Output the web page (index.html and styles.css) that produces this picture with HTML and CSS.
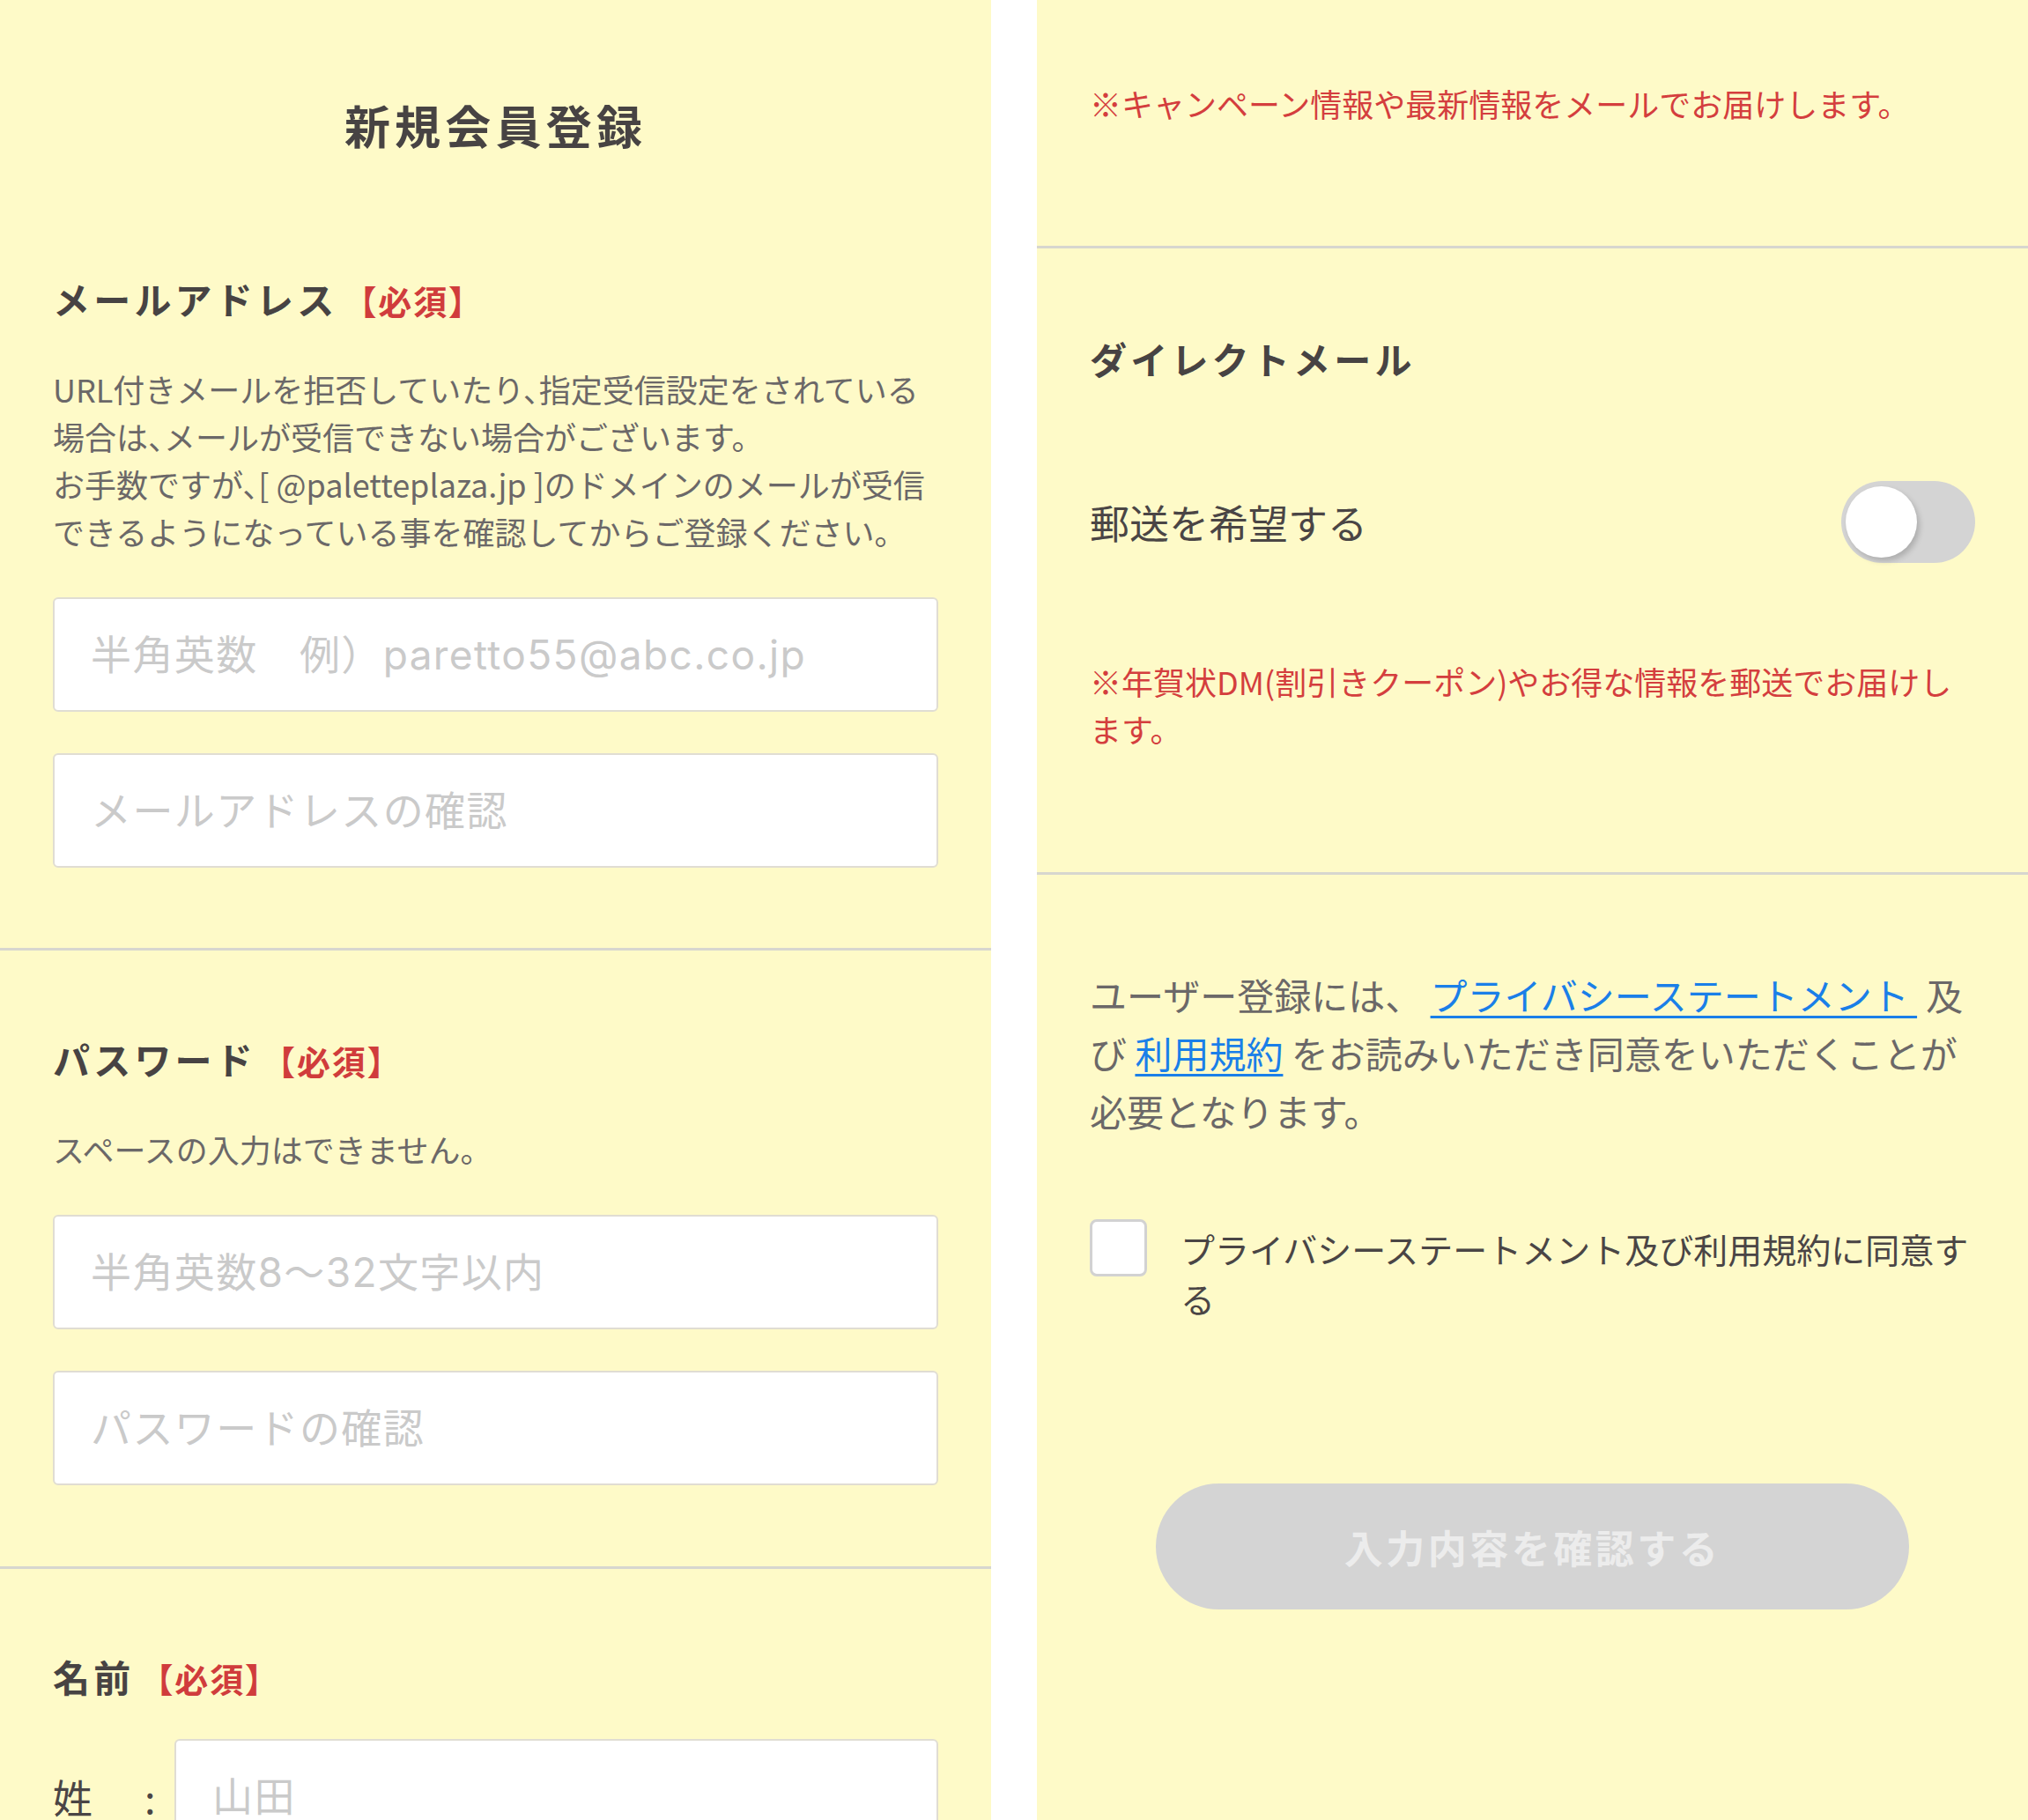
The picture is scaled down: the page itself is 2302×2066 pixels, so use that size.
FILE: index.html
```html
<!DOCTYPE html>
<html lang="ja">
<head>
<meta charset="utf-8">
<title>新規会員登録</title>
<link rel="stylesheet" href="styles.css">
</head>
<body>
<div class="screen">
  <div class="panel">
    <section class="sec sec-first">
      <h1 class="title">新規会員登録</h1>
      <h2 class="label">メールアドレス<span class="req">【必須】</span></h2>
      <p class="note note-compact">URL付きメールを拒否していたり、指定受信設定をされている場合は、メールが受信できない場合がございます。<br>お手数ですが、[ @paletteplaza.jp ]のドメインのメールが受信できるようになっている事を確認してからご登録ください。</p>
      <div class="fields">
        <input class="field" type="email" placeholder="半角英数　例）paretto55@abc.co.jp">
        <input class="field" type="email" placeholder="メールアドレスの確認">
      </div>
    </section>
    <section class="sec sec-pass">
      <h2 class="label">パスワード<span class="req">【必須】</span></h2>
      <p class="note">スペースの入力はできません。</p>
      <div class="fields">
        <input class="field" type="password" placeholder="半角英数8〜32文字以内">
        <input class="field" type="password" placeholder="パスワードの確認">
      </div>
    </section>
    <section class="sec sec-name sec-last">
      <h2 class="label">名前<span class="req">【必須】</span></h2>
      <div class="name-row">
        <span class="name-label">姓</span>
        <span class="name-colon">:</span>
        <input class="field name-field" type="text" placeholder="山田">
      </div>
    </section>
  </div>

  <div class="panel">
    <section class="sec sec-mail">
      <p class="alert">※キャンペーン情報や最新情報をメールでお届けします。</p>
    </section>
    <section class="sec sec-dm">
      <h2 class="label">ダイレクトメール</h2>
      <div class="switch-row">
        <span class="switch-text">郵送を希望する</span>
        <span class="switch"><span class="knob"></span></span>
      </div>
      <p class="alert alert-dm">※年賀状DM(割引きクーポン)やお得な情報を郵送でお届けします。</p>
    </section>
    <section class="sec sec-last sec-agree">
      <p class="agree-text">ユーザー登録には、 <a href="#" class="link link-ps">プライバシーステートメント </a>及び <a href="#" class="link">利用規約</a> をお読みいただき同意をいただくことが必要となります。</p>
      <label class="check-row">
        <span class="checkbox"></span>
        <span class="check-text">プライバシーステートメント及び利用規約に同意する</span>
      </label>
      <div class="btn-wrap">
        <button class="submit" type="button" disabled>入力内容を確認する</button>
      </div>
    </section>
  </div>
</div>
</body>
</html>
```

FILE: styles.css
```css
html, body {
  margin: 0;
  padding: 0;
  background: #ffffff;
}

body {
  width: 2302px;
  height: 2066px;
  overflow: hidden;
  font-family: "Noto Sans CJK JP", "Noto Sans", sans-serif;
  color: #4a4545;
}

.screen {
  display: flex;
  gap: 52px;
  height: 2066px;
}

.panel {
  width: 1125px;
  height: 2066px;
  background: #fefac8;
  overflow: hidden;
  flex-shrink: 0;
}

.sec {
  padding: 94px 60px 92px;
  border-bottom: 3px solid #d7d6cf;
}

.sec-first {
  padding-top: 103px;
  padding-bottom: 91px;
}

.sec-pass {
  padding-top: 91px;
}

.sec-name {
  padding-top: 90px;
}

.sec-last {
  border-bottom: none;
}

.title {
  margin: 0 0 126px;
  font-size: 52px;
  line-height: 78px;
  font-weight: 700;
  letter-spacing: 0.1em;
  text-align: center;
  color: #474343;
}

.label {
  margin: 0;
  font-size: 42px;
  line-height: 63px;
  font-weight: 700;
  letter-spacing: 0.1em;
  color: #474343;
}

.req {
  margin-left: 6px;
  font-size: 38px;
  letter-spacing: 0.05em;
  color: #d03c3c;
}

.note {
  margin: 42px 0 0;
  font-size: 36px;
  line-height: 54px;
  color: #6b6868;
}

.note-compact {
  font-feature-settings: "halt";
}

.fields {
  margin-top: 48px;
  display: flex;
  flex-direction: column;
  gap: 47px;
}

.field {
  display: block;
  box-sizing: border-box;
  width: 100%;
  height: 130px;
  margin: 0;
  padding: 0 41px;
  border: 2px solid #e0ddd3;
  border-radius: 6px;
  background: #ffffff;
  font-family: Inter, "Noto Sans CJK JP", sans-serif;
  font-size: 46px;
  letter-spacing: 0.03em;
  color: #4a4545;
  outline: none;
}

.field::placeholder {
  color: #cacaca;
}

.name-row {
  margin-top: 38px;
  display: flex;
  align-items: center;
}

.name-label {
  width: 104px;
  font-size: 45px;
  color: #4a4545;
}

.name-colon {
  width: 34px;
  font-size: 45px;
  color: #4a4545;
}

.name-field {
  flex: 1;
  width: auto;
}

/* right panel */
.sec-mail {
  padding-top: 90px;
  padding-bottom: 135px;
}

.alert {
  margin: 0;
  font-size: 36px;
  line-height: 54px;
  color: #d43e3e;
}

.sec-dm {
  padding-top: 93px;
  padding-bottom: 136px;
}

.switch-row {
  margin-top: 108px;
  height: 93px;
  display: flex;
  align-items: center;
  justify-content: space-between;
}

.switch-text {
  font-size: 45px;
  color: #4a4545;
}

.switch {
  position: relative;
  width: 152px;
  height: 93px;
  border-radius: 47px;
  background: #d4d4d4;
}

.knob {
  position: absolute;
  left: 5px;
  top: 6px;
  width: 81px;
  height: 81px;
  border-radius: 50%;
  background: #ffffff;
  box-shadow: 3px 4px 6px rgba(0, 0, 0, 0.18);
}

.alert-dm {
  margin-top: 107px;
}

.sec-agree {
  padding-top: 103px;
}

.agree-text {
  margin: 0;
  font-size: 42px;
  line-height: 66px;
  color: #6b6868;
}

.link {
  color: #1a7fe8;
  text-decoration: underline;
  text-decoration-thickness: 3px;
  text-underline-offset: 6px;
}

.link-ps {
  margin-right: 10px;
}

.check-row {
  margin-top: 90px;
  display: flex;
  align-items: flex-start;
}

.checkbox {
  flex-shrink: 0;
  box-sizing: border-box;
  width: 65px;
  height: 65px;
  border: 3px solid #d2d2d2;
  border-radius: 8px;
  background: #ffffff;
}

.check-text {
  margin-left: 38px;
  padding-top: 5px;
  font-size: 39px;
  line-height: 56px;
  color: #4a4545;
}

.btn-wrap {
  margin-top: 183px;
  display: flex;
  justify-content: center;
}

.submit {
  width: 855px;
  height: 143px;
  border: none;
  border-radius: 72px;
  background: #d4d4d4;
  color: #ececec;
  font-family: "Noto Sans CJK JP", "Noto Sans", sans-serif;
  font-size: 44px;
  font-weight: 700;
  letter-spacing: 0.08em;
  padding: 0;
}
```
